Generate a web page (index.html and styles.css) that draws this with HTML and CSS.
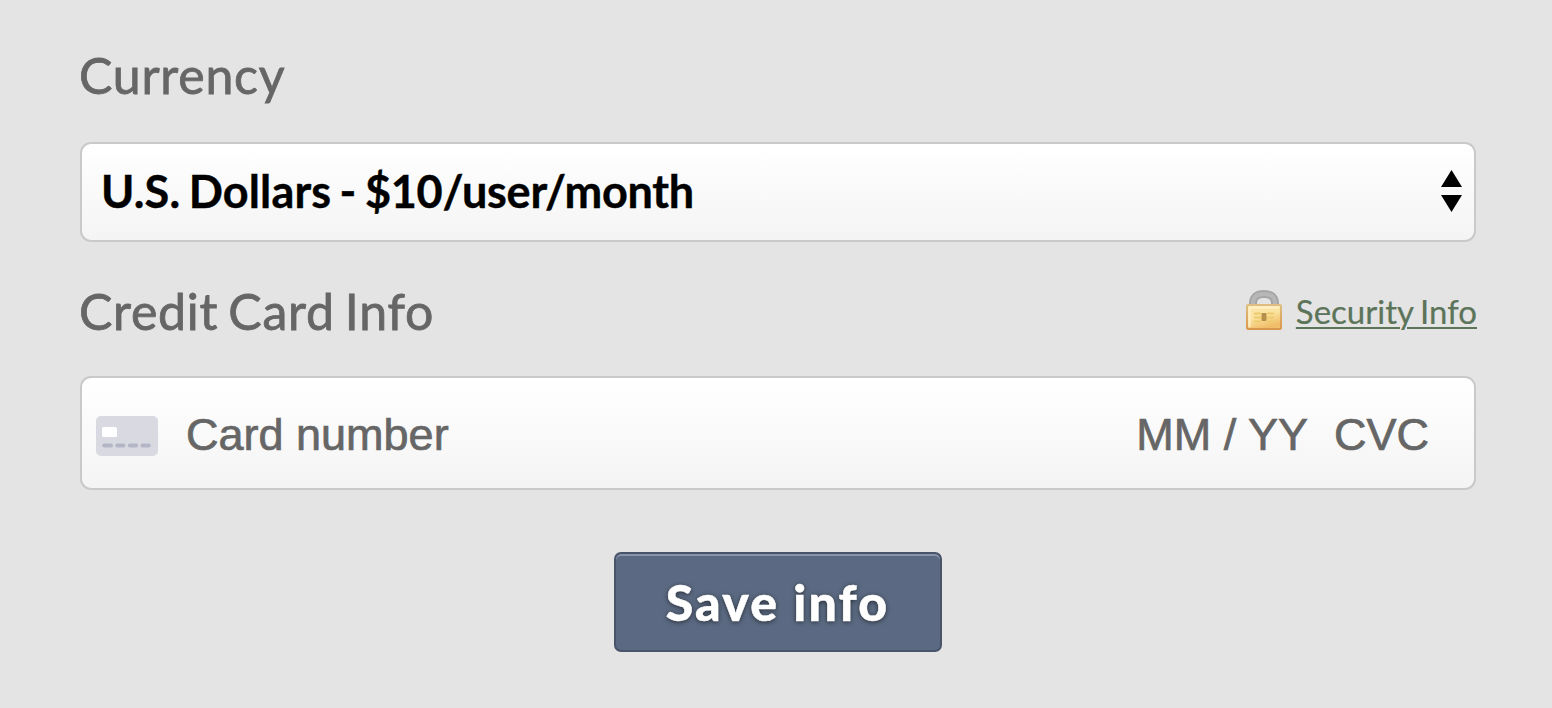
FILE: index.html
```html
<!DOCTYPE html>
<html lang="en">
<head>
<meta charset="utf-8">
<title>Billing</title>
<link rel="stylesheet" href="styles.css">
</head>
<body>
<main class="form">
  <h2 class="label">Currency</h2>
  <div class="field select">
    <span class="value">U.S. Dollars - <span class="price">$10/user/month</span></span>
    <svg class="arrows" width="21" height="42" viewBox="0 0 21 42"><path d="M0 17L10.500 0L21 17zM0 25h21L10.500 42z"/></svg>
  </div>
  <div class="row">
    <h2 class="label">Credit Card Info</h2>
    <a class="security" href="#">
      <svg class="lock" width="36" height="42" viewBox="0 0 36 42">
        <defs>
          <linearGradient id="body" x2=".4" y2="1"><stop stop-color="#fbe6ab"/><stop offset=".55" stop-color="#fae3a0"/><stop offset="1" stop-color="#f1bd68"/></linearGradient>
          <linearGradient id="edge" x2="0" y2="1"><stop stop-color="#dfbd82"/><stop offset="1" stop-color="#d9974e"/></linearGradient>
        </defs>
        <path d="M7 17V13C7 7 11 4 18 4S29 7 29 13v4" fill="none" stroke="#a6a6a6" stroke-width="8"/>
        <path d="M7 17V13C7 7 11 4 18 4S29 7 29 13v4" fill="none" stroke="#b7b7b7" stroke-width="4"/>
        <rect x="1" y="15" width="34" height="24" rx="1" fill="url(#body)" stroke="url(#edge)" stroke-width="2"/>
        <path d="M3 17.500h30M3.500 17v20" stroke="#fff0c8" stroke-width="2"/>
        <path d="M8 23.500h7M21 23.500h7M8 27.500h7M21 27.500h7M8 31.500h7M21 31.500h7" stroke="#edca6c" stroke-width="2"/>
        <rect x="15.500" y="23" width="5" height="8" rx="1" fill="#b68f49"/>
      </svg>
      <span class="security-text">Security Info</span>
    </a>
  </div>
  <div class="field card">
    <svg class="card-icon" width="62" height="40" viewBox="0 0 62 40"><rect width="62" height="40" rx="5" fill="#d9dae1"/><rect x="6" y="11" width="15" height="10" rx="1.500" fill="#fff"/><path d="M8.200 29.500h6.800m6.200 0h6.300m6.300 0h6.300m6.300 0h6.400" stroke="#b4b5c6" stroke-width="4" stroke-linecap="round"/></svg>
    <span class="number">Card number</span><span class="expiry">MM / YY</span><span class="cvc">CVC</span>
  </div>
  <button class="save">Save info</button>
</main>
</body>
</html>
```
FILE: styles.css
```css
* { box-sizing: border-box; }
body { margin: 0; height: 708px; background: #e4e4e4; font-family: Lato, sans-serif; }
.form { display: flex; flex-direction: column; padding: 45px 76px 0 79px; }
.label { margin: 0; height: 60px; font-size: 50px; line-height: 60px; font-weight: 400; letter-spacing: .75px; word-spacing: -3.500px; color: #666; white-space: nowrap; -webkit-text-stroke: .8px #666; }
.field { width: 1396px; margin-left: 1px; display: flex; align-items: center; border: 2px solid #c9c9c9; border-radius: 11px; background: linear-gradient(#fff, #f4f4f4); }
.select { height: 100px; margin-top: 37px; padding: 0 12px 2px 20px; justify-content: space-between; }
.value { margin-left: -1px; font-size: 45px; line-height: 54px; font-weight: 700; color: #000; letter-spacing: .15px; word-spacing: -2.700px; -webkit-text-stroke: .4px #000; }
.price { letter-spacing: -.25px; }
.row { display: flex; justify-content: space-between; margin-top: 39px; height: 60px; }
.security { display: flex; align-items: center; gap: 14px; height: 60px; margin-right: -1px; color: #5c7459; font-size: 33px; line-height: 40px; text-decoration: none; }
.security-text { word-spacing: -1.500px; text-decoration: underline; text-decoration-thickness: 2px; text-underline-offset: 3px; -webkit-text-stroke: .2px #5c7459; }
.card { height: 114px; margin-top: 35px; padding: 3px 45px 0 14px; font-family: "Liberation Sans", sans-serif; font-size: 45px; line-height: 56px; color: #666; -webkit-text-stroke: .7px #666; }
.card-icon { margin: 3px 28px 0 0; -webkit-text-stroke: 0; }
.number { flex: 1; }
.cvc { margin-left: 26px; }
.save { align-self: center; width: 328px; height: 100px; margin-top: 62px; padding: 0; border: 2px solid #47546a; border-radius: 7px; background: #5b6a82; box-shadow: inset 0 2px #8894aa; color: #fff; font: 900 50px/60px Lato, sans-serif; letter-spacing: 2.200px; text-shadow: 0 1px 5px rgba(0,0,0,.65); -webkit-text-stroke: .5px #fff; }
```
